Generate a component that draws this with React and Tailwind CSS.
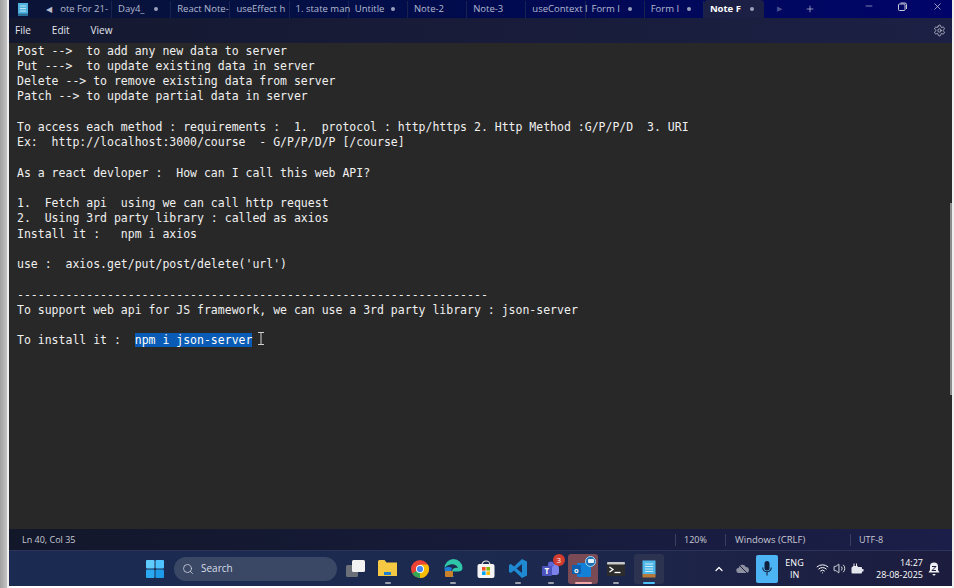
import { Search, Settings, Minus, X, Plus, Wifi, Volume2, ChevronUp } from 'lucide-react';

const lines = [
  'Post -->  to add any new data to server',
  'Put --->  to update existing data in server',
  'Delete --> to remove existing data from server',
  'Patch --> to update partial data in server',
  '',
  'To access each method : requirements :  1.  protocol : http/https 2. Http Method :G/P/P/D  3. URI',
  'Ex:  http://localhost:3000/course  - G/P/P/D/P [/course]',
  '',
  'As a react devloper :  How can I call this web API?',
  '',
  '1.  Fetch api  using we can call http request',
  '2.  Using 3rd party library : called as axios',
  'Install it :   npm i axios',
  '',
  "use :  axios.get/put/post/delete('url')",
  '',
  '--------------------------------------------------------------------',
  'To support web api for JS framework, we can use a 3rd party library : json-server',
  '',
];

// names are cut the way the tab strip cuts them
const tabs = [
  { name: 'Day4_', dot: true },
  { name: 'React Note-' },
  { name: 'useEffect  h' },
  { name: '1. state man' },
  { name: 'Untitle', dot: true },
  { name: 'Note-2' },
  { name: 'Note-3' },
  { name: 'useContext I' },
  { name: 'Form I', dot: true },
  { name: 'Form I', dot: true },
];

function Tab({ tab }) {
  return (
    <div className="relative flex h-[17px] w-[59.2px] shrink-0 items-center border-r border-[#1a2250] pl-[6px]">
      <span className="whitespace-nowrap text-[#b4bad0]">{tab.name}</span>
      {tab.dot && <span className="absolute top-[6px] left-[42px] h-[4px] w-[4px] rounded-full bg-[#9aa0bc]" />}
    </div>
  );
}

function StartLogo() {
  return (
    <svg width="18" height="18" viewBox="0 0 18 18">
      <rect x="0" y="0" width="8.5" height="8.5" rx="1" fill="#5fcbff" />
      <rect x="9.5" y="0" width="8.5" height="8.5" rx="1" fill="#4cc2ff" />
      <rect x="0" y="9.5" width="8.5" height="8.5" rx="1" fill="#2aa8f2" />
      <rect x="9.5" y="9.5" width="8.5" height="8.5" rx="1" fill="#1e9be8" />
    </svg>
  );
}

function TaskIcon({ children, dot, className = '' }) {
  return (
    <div className="flex h-[30px] w-[32.6px] items-center justify-center">
      <div className={`relative flex h-[30px] w-[30px] items-center justify-center rounded-[3px] ${className}`}>
        {children}
        {dot && <span className="absolute bottom-[0px] left-[12px] h-[2px] w-[6px] rounded-full bg-[#9aa0ac]" />}
      </div>
    </div>
  );
}

export default function App() {
  return (
    <div className="flex h-[588px] w-[954px] overflow-hidden bg-white font-['Open_Sans',sans-serif]">
      <div className="w-[7px] bg-gradient-to-r from-[#a0a0a0] to-[#c4c4c4]" />
      <div className="w-[2px] bg-[#eeeeee]" />
      <div className="flex h-[586px] w-[943px] flex-col">
        {/* title bar with tabs */}
        <div className="relative flex h-[18px] items-center bg-gradient-to-r from-[#0b1436] via-[#000a4e] to-[#00046a] text-[9.5px]">
          <svg className="mr-[18px] ml-[9px] shrink-0" width="10" height="13" viewBox="0 0 10 13">
            <rect x="0" y="0" width="10" height="11" fill="#4fb3dd" />
            <rect x="0" y="10.5" width="10" height="2.5" fill="#2a6f95" />
            <path d="M2 3h6M2 5.5h6M2 8h6" stroke="#d8eef8" strokeWidth="0.8" />
          </svg>
          <span className="mr-[11px] text-[8px] text-[#b8bccb]">◀</span>
          <div className="flex h-[17px] w-[49px] shrink-0 items-center justify-end whitespace-nowrap border-r border-[#1a2250] pr-[3px] text-[#b4bad0]">
            <span>ote For 21-</span>
          </div>
          {tabs.map((tab, i) => (
            <Tab key={i} tab={tab} />
          ))}
          <div className="flex h-[18px] w-[60px] shrink-0 items-center rounded-t-[4px] bg-[#1c2044] pl-[6px] font-bold text-white">
            <span className="w-[32px] whitespace-nowrap">Note F</span>
            <span className="ml-[8px] h-[4px] w-[4px] rounded-full bg-[#9aa0bc]" />
          </div>
          <span className="ml-[13px] text-[7px] text-[#4a5090]">▶</span>
          <Plus className="ml-[23px] text-[#d8dae6]" size={10} strokeWidth={1.5} />
          <div className="ml-auto flex items-center">
            <Minus className="mr-[24px] mb-[6px] text-[#c8cad8]" size={10} strokeWidth={1.5} />
            <svg className="mr-[25px] mb-[6px]" width="9" height="9" viewBox="0 0 9 9" fill="none" stroke="#c8cad8" strokeWidth="1">
              <rect x="0.5" y="2" width="6.5" height="6.5" rx="1" />
              <path d="M2.5 1h4.5a1.500 1.500 0 0 1 1.500 1.500V7" />
            </svg>
            <X className="mr-[9px] mb-[6px] text-[#d8dae6]" size={11} strokeWidth={1.5} />
          </div>
        </div>

        {/* menu bar */}
        <div className="flex h-[25px] items-center bg-gradient-to-r from-[#14182f] to-[#1c2044] text-[10px] text-[#e4e6ee]">
          <span className="ml-[6px]">File</span>
          <span className="ml-[21px]">Edit</span>
          <span className="ml-[21px]">View</span>
          <Settings className="mr-[6px] ml-auto text-[#c8cad8]" size={13} strokeWidth={1.5} />
        </div>

        {/* editor */}
        <div className="relative flex-1 bg-[#282828] pt-[0.5px] pl-[8px] font-['DejaVu_Sans_Mono',monospace] text-[11.5px] leading-[15.26px] whitespace-pre text-[#f0f0f0]">
          {lines.map((line, i) => (
            <div key={i} className="h-[15.26px]">{line}</div>
          ))}
          <div className="h-[15.26px]">
            To install it :  <span className="bg-[#0a5bb5] text-white">npm i json-server</span>
          </div>
          <svg className="absolute top-[289px] left-[248px]" width="8" height="13" viewBox="0 0 8 13" fill="none" stroke="#d0d0d0" strokeWidth="1">
            <path d="M1 0.5h6M1 12.5h6M4 0.500v12" />
          </svg>
          <div className="absolute top-[160px] right-[0px] h-[192px] w-[2px] bg-[#8c8c8c]" />
        </div>

        {/* status bar */}
        <div className="flex h-[22px] items-center border-b border-[#2c3358] bg-gradient-to-r from-[#12172a] to-[#1b1e48] text-[9px] text-[#c8cad4]">
          <span className="ml-[13px]">Ln 40, Col 35</span>
          <div className="ml-auto flex h-[12px] items-center">
            <span className="flex h-full w-[50px] items-center border-l border-[#3a3f60] pl-[8px]">120%</span>
            <span className="flex h-full w-[125px] items-center border-l border-[#3a3f60] pt-[1px] pl-[9px] text-[9.5px]">Windows (CRLF)</span>
            <span className="flex h-full w-[102px] items-center border-l border-[#3a3f60] pl-[8px]">UTF-8</span>
          </div>
        </div>

        {/* taskbar */}
        <div className="flex h-[35px] items-center bg-gradient-to-r from-[#1b2a50] via-[#1c2a50] to-[#1c1c3e] text-white">
          <div className="ml-[137px]"><StartLogo /></div>
          <div className="ml-[10px] flex h-[24px] w-[163px] items-center rounded-full bg-[#3a4866] pl-[8px] text-[10px] text-[#d8dce6]">
            <Search size={12} strokeWidth={1.5} />
            <span className="ml-[7px]">Search</span>
          </div>
          <div className="ml-[2px] flex items-center">
            <TaskIcon>
              <svg width="19" height="17" viewBox="0 0 19 17">
                <rect x="0" y="5" width="12" height="12" rx="1.5" fill="#6b6f78" />
                <rect x="6" y="0" width="13" height="12" rx="1.5" fill="#f2f2f2" />
              </svg>
            </TaskIcon>
            <TaskIcon dot>
              <svg width="19" height="17" viewBox="0 0 19 17">
                <path d="M0 1.500A1.500 1.500 0 0 1 1.500 0h5l2 2.500H19V16H0z" fill="#f6c945" />
                <rect x="6" y="12" width="7" height="3" fill="#1c7fd0" />
              </svg>
            </TaskIcon>
            <TaskIcon>
              <svg width="18" height="18" viewBox="0 0 18 18">
                <circle cx="9" cy="9" r="9" fill="#ea4335" />
                <path d="M9 9 L1.200 13.500 A9 9 0 0 0 13 17 z" fill="#34a853" />
                <path d="M9 4.500h7.800A9 9 0 0 1 9 18 z" fill="#fbbc05" />
                <circle cx="9" cy="9" r="4" fill="#fff" />
                <circle cx="9" cy="9" r="3.100" fill="#4285f4" />
              </svg>
            </TaskIcon>
            <TaskIcon dot>
              <svg width="19" height="19" viewBox="0 0 19 19">
                <path d="M0.500 9a9 9 0 0 1 18 0c0 2.500-2 3.500-4.500 3.500H8c0-3 3-4.500 6-3.500C12 4 5 4 0.500 9z" fill="#2fc5a8" />
                <path d="M0.500 9c0 4 2 7.500 6 9h4c-3-1.500-4-5-2.500-9-2-1-5.500-1.500-7.500 0z" fill="#1b7fd8" />
                <rect x="1" y="12" width="8" height="6" rx="1" fill="#c9812b" />
              </svg>
            </TaskIcon>
            <TaskIcon>
              <svg width="18" height="18" viewBox="0 0 18 18">
                <path d="M5 5a4 4 0 0 1 8 0" fill="none" stroke="#e8e8e8" strokeWidth="1.200" />
                <rect x="0.500" y="4" width="17" height="14" rx="2" fill="#f4f4f4" />
                <rect x="5" y="7" width="3.600" height="3.600" fill="#f25022" />
                <rect x="9.400" y="7" width="3.600" height="3.600" fill="#7fba00" />
                <rect x="5" y="11.400" width="3.600" height="3.600" fill="#00a4ef" />
                <rect x="9.400" y="11.400" width="3.600" height="3.600" fill="#ffb900" />
              </svg>
            </TaskIcon>
            <TaskIcon dot>
              <svg width="18" height="19" viewBox="0 0 18 19">
                <path d="M13 0l5 2.500v14L13 19 5 11.500 1.800 14 0 13V6l1.800-1L5 7.500z" fill="#1f8ad2" />
                <path d="M13 5L7.500 9.500 13 14z" fill="#1c2a50" />
              </svg>
            </TaskIcon>
            <TaskIcon dot>
              <svg width="18" height="16" viewBox="0 0 18 16">
                <circle cx="13.500" cy="5" r="2.500" fill="#7b83eb" />
                <rect x="7" y="4" width="10" height="10" rx="3" fill="#7b83eb" />
                <circle cx="9" cy="3.500" r="3" fill="#5f67d8" />
                <rect x="0" y="5" width="10" height="10" rx="1" fill="#4b53bc" />
                <text x="2.500" y="13" fontSize="8" fontWeight="700" fill="#fff">T</text>
              </svg>
              <span className="absolute top-[0px] left-[17px] flex h-[12px] w-[12px] items-center justify-center rounded-full bg-[#d13c2f] text-[8px] text-white">3</span>
            </TaskIcon>
            <TaskIcon className="bg-[#7a4a55]">
              <svg width="22" height="20" viewBox="0 0 22 20">
                <rect x="5" y="4" width="14" height="14" rx="1" fill="#1380d8" />
                <rect x="0" y="6" width="9" height="9" rx="1" fill="#0f5fb0" />
                <text x="2" y="13.500" fontSize="7.500" fontWeight="700" fill="#fff">o</text>
              </svg>
              <span className="absolute top-[2px] right-[2px] flex h-[11px] w-[11px] items-center justify-center rounded-full border border-[#9fd8f5] bg-[#1c6fb5]">
                <span className="h-[4px] w-[6px] rounded-[1px] bg-[#e8f4fb]" />
              </span>
              <span className="absolute bottom-[0px] left-[7px] h-[2px] w-[17px] rounded-full bg-[#f0a8a8]" />
            </TaskIcon>
            <TaskIcon dot>
              <svg width="18" height="14" viewBox="0 0 18 14">
                <rect x="0" y="0" width="18" height="14" rx="1.500" fill="#2c2c2c" />
                <rect x="0" y="0" width="18" height="2.500" rx="1" fill="#c8c8c8" />
                <path d="M2.500 5l3.500 2.500L2.500 10" fill="none" stroke="#fff" strokeWidth="1.300" />
                <path d="M7.500 10.500h6" stroke="#fff" strokeWidth="1.300" />
              </svg>
            </TaskIcon>
            <TaskIcon className="bg-[#2c3350]">
              <svg width="14" height="18" viewBox="0 0 14 18">
                <rect x="0.500" y="0.500" width="13" height="14" fill="#4fb8e8" />
                <rect x="0.500" y="14" width="13" height="3.500" fill="#b87a3a" />
                <path d="M3 4h8M3 6.500h8M3 9h8M3 11.500h8" stroke="#d8f0fa" strokeWidth="0.900" />
              </svg>
              <span className="absolute bottom-[0px] left-[9px] h-[2px] w-[12px] rounded-full bg-[#4cc2ff]" />
            </TaskIcon>
          </div>
          <div className="ml-auto flex items-center">
            <ChevronUp size={12} strokeWidth={2.5} />
            {/* cloud with a slash */}
            <svg className="ml-[11.5px]" width="13" height="11" viewBox="0 0 13 11">
              <path d="M3 10a2.500 2.500 0 0 1-.4-5A3.800 3.800 0 0 1 9.800 4a3 3 0 0 1 .2 6z" fill="#8c90a0" />
              <path d="M1.500 0.500l10 10" stroke="#1c1c3e" strokeWidth="1" />
            </svg>
            <div className="ml-[6.5px] flex h-[28px] w-[22px] items-center justify-center rounded-[2px] bg-[#4cb4f5]">
              <svg width="10" height="15" viewBox="0 0 10 15">
                <rect x="2.500" y="0" width="5" height="9.500" rx="2.500" fill="#10203c" />
                <path d="M0.700 6.500a4.300 4.300 0 0 0 8.600 0M5 11v3.500" fill="none" stroke="#10203c" strokeWidth="1.100" />
              </svg>
            </div>
            <div className="ml-[7px] flex w-[20px] flex-col items-center text-[9px] leading-[12px]">
              <span>ENG</span>
              <span>IN</span>
            </div>
            <Wifi className="ml-[11.5px]" size={13} strokeWidth={1.8} />
            <Volume2 className="ml-[4px]" size={13} strokeWidth={1.5} />
            {/* battery with plug */}
            <svg className="ml-[5px]" width="13" height="11" viewBox="0 0 13 11">
              <path d="M3 0.500v3M5.500 0.500v3M2 3.500h4.500V5L4.500 6.500 2 5z" fill="none" stroke="#fff" strokeWidth="0.900" />
              <rect x="0.500" y="4" width="10.500" height="6.500" rx="1" fill="#e4e6ee" />
              <rect x="11" y="6" width="1.500" height="2.500" fill="#e4e6ee" />
            </svg>
            <div className="ml-[12px] flex flex-col items-end text-[9px] leading-[12px]">
              <span>14:27</span>
              <span>28-08-2025</span>
            </div>
            {/* bell with sleep mark */}
            <svg className="mr-[12px] ml-[5px]" width="12" height="14" viewBox="0 0 12 14">
              <path d="M6 0.500a4 4 0 0 1 4 4v3.500l1.500 2.500H0.500L2 8V4.500a4 4 0 0 1 4-4z" fill="#f0f0f4" />
              <path d="M4.500 12a1.500 1.500 0 0 0 3 0z" fill="#f0f0f4" />
              <path d="M4 4.500h4L4 8.500h4" fill="none" stroke="#1c1c3e" strokeWidth="1" />
            </svg>
          </div>
        </div>
      </div>
      <div className="w-[2px] bg-[#eeeeee]" />
    </div>
  );
}
